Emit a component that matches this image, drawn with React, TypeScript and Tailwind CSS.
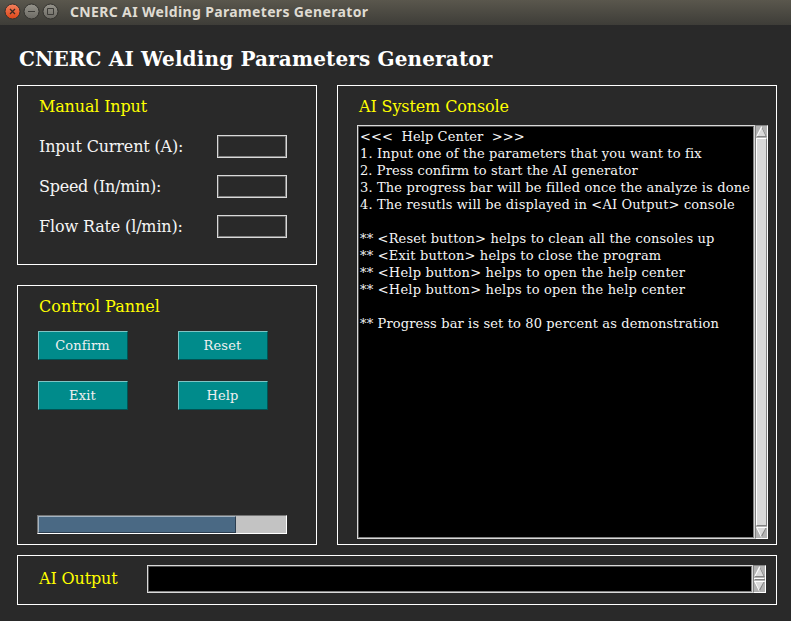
import React from "react";

const WHITE_FRAME = "border border-white";

function WindowButton({ kind }: { kind: "close" | "min" | "max" }) {
  const close = kind === "close";
  return (
    <svg width="17" height="17" viewBox="0 0 17 17" className="block">
      <defs>
        <linearGradient id={kind} x1="0" y1="0" x2="0" y2="1">
          <stop offset="0" stopColor={close ? "#f5825f" : "#97958c"} />
          <stop offset="1" stopColor={close ? "#dc4517" : "#6b6963"} />
        </linearGradient>
      </defs>
      <circle cx="8.5" cy="8.5" r="7.5" fill={`url(#${kind})`} stroke="#33322e" strokeWidth="1" />
      {close && <path d="M6 6l5 5M11 6l-5 5" stroke="#3b2a22" strokeWidth="1.3" />}
      {kind === "min" && <path d="M5 8.5h7" stroke="#3c3b37" strokeWidth="1" />}
      {kind === "max" && <path d="M5.5 5.5h6v6h-6z" fill="none" stroke="#3c3b37" strokeWidth="1" />}
    </svg>
  );
}

function Arrow({ down = false }: { down?: boolean }) {
  return (
    <svg width="11" height="11" viewBox="0 0 11 11" className="block shrink-0">
      {down ? (
        <>
          <path d="M0 0H11L5.5 11z" fill="#d9d9d9" />
          <path d="M11 0L5.5 11L5 9L9.5 1z" fill="#828282" />
          <path d="M0 0H11L10.5 1H1.5L5.5 9.5V11z" fill="#fff" />
        </>
      ) : (
        <>
          <path d="M5.5 0L11 11H0z" fill="#d9d9d9" />
          <path d="M5.5 0L11 11H0L.5 10H9.5L5.5 1.5z" fill="#828282" />
          <path d="M5.5 0L0 11L1.5 10L6 1.5z" fill="#fff" />
        </>
      )}
    </svg>
  );
}

function Scrollbar({ className }: { className: string }) {
  return (
    <div className={`flex w-[13px] flex-col border border-t-[#828282] border-l-[#828282] border-r-white border-b-white bg-[#b3b3b3] ${className}`}>
      <Arrow />
      <div className="my-px min-h-0 flex-1 border border-t-white border-l-white border-r-[#828282] border-b-[#828282] bg-[#d9d9d9]" />
      <Arrow down />
    </div>
  );
}

function Field({ label, tracking }: { label: string; tracking: string }) {
  return (
    <div className="flex h-10 items-center justify-between">
      <span className={`pt-[2px] ${tracking}`}>{label}</span>
      <div className="h-[23px] w-[70px] border border-[#d9d9d9]">
        <div className="h-full border border-t-[#5c5c5c] border-l-[#5c5c5c] border-r-[#828282] border-b-[#828282]" />
      </div>
    </div>
  );
}

function Button({ label }: { label: string }) {
  return (
    <button className="h-[29px] w-[90px] border border-t-[#7fc5c5] border-l-[#7fc5c5] border-r-[#005353] border-b-[#005353] bg-[#008b8b] pr-px text-[13px] leading-[27px] tracking-[0.15px] text-[#f0f0f0]">
      {label}
    </button>
  );
}

const HELP: [string, string][] = [
  ["<<<  Help Center  >>>", "tracking-[0.1px]"],
  ["1. Input one of the parameters that you want to fix", "tracking-[0.135px]"],
  ["2. Press confirm to start the AI generator", "tracking-[0.1px]"],
  ["3. The progress bar will be filled once the analyze is done", "tracking-[0.15px]"],
  ["4. The resutls will be displayed in <AI Output> console", "tracking-[0.15px]"],
  ["", ""],
  ["** <Reset button> helps to clean all the consoles up", "tracking-[0.155px]"],
  ["** <Exit button> helps to close the program", "tracking-[0.185px]"],
  ["** <Help button> helps to open the help center", "tracking-[0.21px]"],
  ["** <Help button> helps to open the help center", "tracking-[0.21px]"],
  ["", ""],
  ["** Progress bar is set to 80 percent as demonstration", "tracking-[0.13px]"],
];

export default function App() {
  return (
    <div className="flex h-[621px] w-[791px] flex-col bg-[#292929] font-['DejaVu_Serif',serif] text-[16px] text-[#f5f5f5]">
      <header className="flex h-[25px] items-center gap-[2px] bg-linear-to-b from-[#5a574d] to-[#3e3d38] pb-[2px] pl-1">
        <WindowButton kind="close" />
        <WindowButton kind="min" />
        <WindowButton kind="max" />
        <span className="ml-[9px] font-['Noto_Sans',sans-serif] text-[14px] leading-5 font-bold tracking-[0.35px] text-[#dfdbd2]">
          CNERC AI Welding Parameters Generator
        </span>
      </header>
      <h1 className="h-[60px] pt-[21px] pl-[19px] text-[20px] leading-[26px] font-bold tracking-[0.14px] text-white">
        CNERC AI Welding Parameters Generator
      </h1>
      <div className="flex gap-5 pl-[17px]">
        <div className="flex w-[300px] flex-col gap-5">
          <section className={`h-[180px] ${WHITE_FRAME} pr-[29px] pl-[21px]`}>
            <h2 className="h-10 leading-[42px] tracking-[-0.16px] text-[#ffff00]">Manual Input</h2>
            <Field label="Input Current (A):" tracking="tracking-[-0.17px]" />
            <Field label="Speed (In/min):" tracking="tracking-[-0.26px]" />
            <Field label="Flow Rate (l/min):" tracking="tracking-[-0.15px]" />
          </section>
          <section className={`flex h-[260px] flex-col ${WHITE_FRAME} pb-[10px] pl-[19px]`}>
            <h2 className="h-[45px] pl-[2px] leading-[42px] text-[#ffff00]">Control Pannel</h2>
            <div className="grid grid-cols-[90px_90px] gap-x-[50px] gap-y-[21px] pl-px">
              <Button label="Confirm" />
              <Button label="Reset" />
              <Button label="Exit" />
              <Button label="Help" />
            </div>
            <div className="mt-auto h-[19px] w-[250px] border border-t-[#757575] border-l-[#757575] border-r-white border-b-white bg-[#c3c3c3]">
              <div className="h-full w-[198px] border border-t-[#a4b4c2] border-l-[#a4b4c2] border-r-[#2c3e50] border-b-[#2c3e50] bg-[#4a6984]" />
            </div>
          </section>
        </div>
        <section className={`h-[460px] w-[440px] ${WHITE_FRAME} pl-[19px]`}>
          <h2 className="h-[39px] pl-[2px] leading-[42px] tracking-[-0.12px] text-[#ffff00]">AI System Console</h2>
          <div className="flex">
            <div className="h-[414px] w-[398px] border border-[#d9d9d9]">
              <div className="h-full border border-t-[#4c4c4c] border-l-[#4c4c4c] border-r-[#828282] border-b-[#828282] bg-black pt-px pl-px text-[13px] leading-[17px] whitespace-pre">
                {HELP.map(([text, tracking], i) => (
                  <p key={i} className={`h-[17px] ${tracking}`}>
                    {text}
                  </p>
                ))}
              </div>
            </div>
            <Scrollbar className="h-[414px]" />
          </div>
        </section>
      </div>
      <section className={`mt-[10px] ml-[17px] flex h-[50px] w-[760px] ${WHITE_FRAME} pt-[9px] pl-[21px]`}>
        <h2 className="w-[108px] leading-[27px] tracking-[-0.15px] text-[#ffff00]">AI Output</h2>
        <div className="h-7 w-[606px] border border-[#d9d9d9]">
          <div className="h-full border border-t-[#4c4c4c] border-l-[#4c4c4c] border-r-[#828282] border-b-[#828282] bg-black" />
        </div>
        <Scrollbar className="h-7" />
      </section>
    </div>
  );
}
